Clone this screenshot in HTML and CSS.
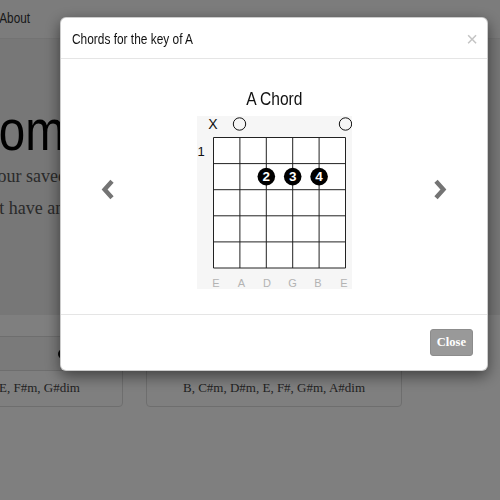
FILE: index.html
```html
<!DOCTYPE html>
<html>
<head>
<meta charset="utf-8">
<link rel="stylesheet" href="styles.css">
</head>
<body>
<div class="page">
  <nav class="navbar">
    <div class="nav-links">
      <span class="nav-link">Home</span>
      <span class="nav-link">About</span>
    </div>
  </nav>
  <section class="jumbotron">
    <h1 class="jumbo-title">Welcome</h1>
    <p class="jumbo-text">Find each of your saved chords below.</p>
    <p class="jumbo-text">So, if you don't have an account yet, sign up.</p>
  </section>
  <div class="cards">
    <div class="card">
      <div class="card-header"><span class="card-badge"></span></div>
      <div class="card-body">A, Bm, C#m, D, E, F#m, G#dim</div>
    </div>
    <div class="card">
      <div class="card-header"><span class="card-badge"></span></div>
      <div class="card-body">B, C#m, D#m, E, F#, G#m, A#dim</div>
    </div>
  </div>
</div>
<div class="backdrop"></div>
<div class="modal">
  <div class="modal-header">
    <span class="modal-title">Chords for the key of A</span>
    <span class="modal-close">×</span>
  </div>
  <div class="modal-body">
    <svg class="chevron" width="13" height="21" viewBox="0 0 13 21"><polyline points="11,2.2 3.6,10.5 11,18.8" fill="none" stroke="#747474" stroke-width="4.4"/></svg>
    <div class="slide">
      <div class="slide-title"><span class="narrow">A Chord</span></div>
      <svg class="diagram" width="155" height="173" viewBox="0 0 155 173">
        <rect width="155" height="173" fill="#f6f6f6"/>
        <rect x="16.5" y="21.5" width="132" height="130.5" fill="#fff"/>
        <g stroke="#222" stroke-width="1">
          <line x1="16.5" y1="21.5" x2="16.5" y2="152"/>
          <line x1="42.9" y1="21.5" x2="42.9" y2="152"/>
          <line x1="69.3" y1="21.5" x2="69.3" y2="152"/>
          <line x1="95.7" y1="21.5" x2="95.7" y2="152"/>
          <line x1="122.1" y1="21.5" x2="122.1" y2="152"/>
          <line x1="148.5" y1="21.5" x2="148.5" y2="152"/>
          <line x1="16.5" y1="21.5" x2="148.5" y2="21.5"/>
          <line x1="16.5" y1="47.6" x2="148.5" y2="47.6"/>
          <line x1="16.5" y1="73.7" x2="148.5" y2="73.7"/>
          <line x1="16.5" y1="99.8" x2="148.5" y2="99.8"/>
          <line x1="16.5" y1="125.9" x2="148.5" y2="125.9"/>
          <line x1="16.5" y1="152" x2="148.5" y2="152"/>
        </g>
        <text class="d-mark" x="16" y="13">X</text>
        <circle cx="42.5" cy="8" r="6.2" fill="none" stroke="#111" stroke-width="1"/>
        <circle cx="148.5" cy="8" r="6.2" fill="none" stroke="#111" stroke-width="1"/>
        <text class="d-fret" x="4" y="40">1</text>
        <circle cx="69.3" cy="60.6" r="8.8" fill="#000"/>
        <circle cx="95.7" cy="60.6" r="8.8" fill="#000"/>
        <circle cx="122.1" cy="60.6" r="8.8" fill="#000"/>
        <text class="d-num" x="69.3" y="65.4">2</text>
        <text class="d-num" x="95.7" y="65.4">3</text>
        <text class="d-num" x="122.1" y="65.4">4</text>
        <text class="d-label" x="19" y="171">E</text>
        <text class="d-label" x="44.5" y="171">A</text>
        <text class="d-label" x="70" y="171">D</text>
        <text class="d-label" x="95.5" y="171">G</text>
        <text class="d-label" x="121" y="171">B</text>
        <text class="d-label" x="147" y="171">E</text>
      </svg>
    </div>
    <svg class="chevron" width="13" height="21" viewBox="0 0 13 21"><polyline points="2,2.2 9.4,10.5 2,18.8" fill="none" stroke="#747474" stroke-width="4.4"/></svg>
  </div>
  <div class="modal-footer">
    <button class="btn-close">Close</button>
  </div>
</div>
</body>
</html>
```
FILE: styles.css
```css
html, body {
  margin: 0;
  padding: 0;
  height: 100%;
}
body {
  font-family: "Liberation Serif", serif;
  background: #fff;
  color: #333;
  overflow: hidden;
}
.page {
  margin-left: -133px;
  width: 760px;
}
.navbar {
  height: 38px;
  background: #f8f8f8;
  border-bottom: 1px solid #e7e7e7;
  display: flex;
  align-items: flex-start;
}
.nav-links {
  width: 163px;
  display: flex;
  justify-content: flex-end;
  gap: 18px;
  padding-top: 10px;
  font-family: "Liberation Sans", sans-serif;
  font-size: 14px;
  line-height: 16px;
  color: #333;
  transform: scaleX(0.84);
  transform-origin: right center;
}
.jumbotron {
  background: #eee;
  height: 276px;
  box-sizing: border-box;
  padding: 59px 0 0 27px;
}
.jumbo-title {
  display: inline-block;
  margin: 0 0 2px;
  font-family: "Liberation Sans", sans-serif;
  font-weight: normal;
  font-size: 58px;
  line-height: 64px;
  color: #000;
  white-space: nowrap;
  transform: scaleX(0.82);
  transform-origin: left center;
}
.jumbo-text {
  margin: 0 0 8px;
  font-size: 18px;
  line-height: 24px;
  color: #555;
  white-space: nowrap;
}
.cards {
  display: flex;
  gap: 23px;
  margin-top: 21px;
}
.card {
  width: 256px;
  box-sizing: border-box;
  border: 1px solid #ddd;
  border-radius: 4px;
  overflow: hidden;
}
.card-header {
  height: 34px;
  box-sizing: border-box;
  background: #f5f5f5;
  border-bottom: 1px solid #ddd;
  display: flex;
  justify-content: flex-end;
  align-items: center;
  padding: 0 14px;
}
.card-badge {
  width: 50px;
  height: 10px;
  border-radius: 5px;
  background: #111;
}
.card-body {
  padding: 8px 10px 10px;
  font-size: 13px;
  line-height: 17px;
  text-align: center;
  color: #444;
}
.backdrop {
  position: fixed;
  inset: 0;
  background: rgba(0, 0, 0, 0.5);
}
.modal {
  position: fixed;
  left: 60px;
  top: 17px;
  width: 428px;
  box-sizing: border-box;
  background: #fff;
  border: 1px solid rgba(0, 0, 0, 0.2);
  border-radius: 6px;
  box-shadow: 0 5px 15px rgba(0, 0, 0, 0.5);
  font-family: "Liberation Sans", sans-serif;
}
.modal-header {
  display: flex;
  justify-content: space-between;
  align-items: center;
  padding: 13px 9px 11px 11px;
  border-bottom: 1px solid #e5e5e5;
}
.modal-title {
  display: inline-block;
  font-size: 14px;
  line-height: 16px;
  color: #111;
  transform: scaleX(0.85);
  transform-origin: left center;
}
.modal-close {
  font-size: 20px;
  line-height: 16px;
  color: #c4c4c4;
}
.modal-body {
  display: flex;
  justify-content: space-between;
  align-items: center;
  padding: 29px 40px 25px;
}
.chevron {
  display: block;
  margin-top: 2px;
}
.slide {
  display: flex;
  flex-direction: column;
  align-items: center;
}
.slide-title {
  font-size: 19px;
  line-height: 22px;
  color: #111;
  margin-bottom: 6px;
}
.narrow {
  display: inline-block;
  transform: scaleX(0.82);
}
.diagram {
  display: block;
  font-family: "Liberation Sans", sans-serif;
}
.d-mark {
  font-size: 14px;
  text-anchor: middle;
  fill: #111;
}
.d-fret {
  font-size: 13px;
  text-anchor: middle;
  fill: #111;
}
.d-num {
  font-size: 13.5px;
  font-weight: bold;
  text-anchor: middle;
  fill: #fff;
}
.d-label {
  font-size: 11px;
  text-anchor: middle;
  fill: #b3b3b3;
}
.modal-footer {
  border-top: 1px solid #e5e5e5;
  padding: 14px;
  display: flex;
  justify-content: flex-end;
}
.btn-close {
  height: 27px;
  padding: 0 6px;
  background: #999;
  border: 1px solid #8c8c8c;
  border-radius: 3px;
  color: #fff;
  font-family: "Liberation Serif", serif;
  font-weight: bold;
  font-size: 12.5px;
}
```
